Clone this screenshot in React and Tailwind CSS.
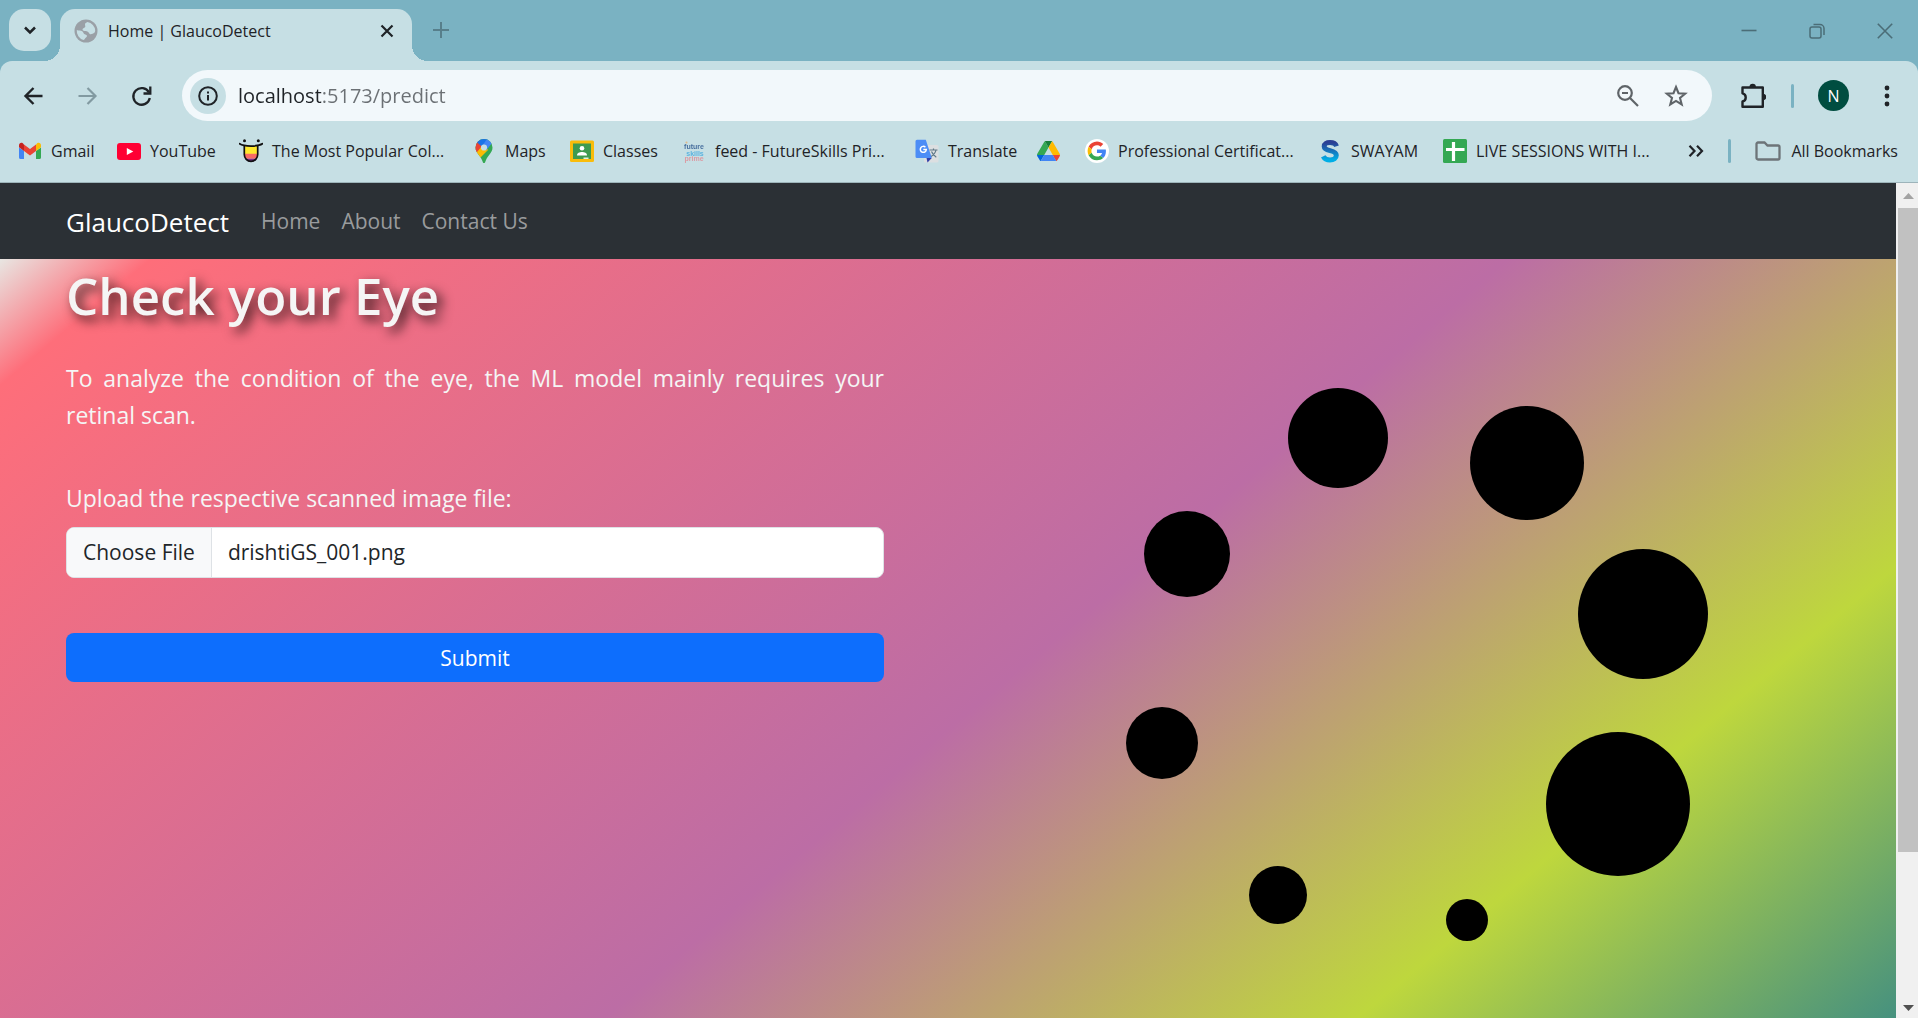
import React from "react";

function GlobeIcon() {
  return (
    <svg viewBox="0 0 24 24" className="size-6 shrink-0" aria-hidden="true">
      <circle cx="12" cy="12" r="11.500" fill="#9aa0a6" />
      <path
        fill="#c6dfe4"
        d="M13.500 3c-1.300.6-2.500 1-2.500 2.500s.8 1.700 0 2.700-2.500.8-2.500 2.300 1.700 1.500 3.200 1.500 3 1 3.500 2.300 2 1 3.400.5 2.600-1.300 2.600-3.300A9.200 9.200 0 0 0 13.500 3z"
      />
      <path
        fill="#c6dfe4"
        d="M2.800 11c2 1 4 0 5.500 1.300s1 2.700 3 3.200 2.200 2 .7 3-1 2.200-2.500 2.400A9.300 9.300 0 0 1 2.800 11z"
      />
    </svg>
  );
}

function GmailIcon() {
  return (
    <svg viewBox="0 0 24 24" className="size-6 shrink-0" aria-hidden="true">
      <path fill="#4285f4" d="M1 8.500v10A1.600 1.600 0 0 0 2.600 20H6V12z" />
      <path fill="#34a853" d="M18 20h3.400a1.600 1.600 0 0 0 1.600-1.500v-10L18 12z" />
      <path fill="#fbbc04" d="M18 5.500V12l5-3.700V6.200c0-2-2.200-3.100-3.800-1.900z" />
      <path fill="#ea4335" d="M6 12V5.500l6 4.500 6-4.500V12l-6 4.500z" />
      <path fill="#c5221f" d="M1 6.200v2.100L6 12V5.500L4.800 4.300C3.200 3.100 1 4.200 1 6.200z" />
    </svg>
  );
}

function YouTubeIcon() {
  return (
    <svg viewBox="0 0 24 24" className="size-6 shrink-0" aria-hidden="true">
      <rect x="0" y="4" width="24" height="17" rx="3" fill="#ff0033" />
      <path fill="#fff" d="M9.800 9v7l6.500-3.500z" />
    </svg>
  );
}

function ColorHuntIcon() {
  return (
    <svg viewBox="0 0 24 24" className="size-6 shrink-0" aria-hidden="true">
      <circle cx="5.500" cy="1.700" r="1.500" fill="#111" />
      <circle cx="19.300" cy="1.700" r="1.500" fill="#111" />
      <clipPath id="tongue">
        <path d="M5 7h14v9a7 7 0 0 1-14 0z" />
      </clipPath>
      <g clipPath="url(#tongue)">
        <path fill="#ffe92e" d="M4 6h16v9H4z" />
        <path fill="#f96b63" d="M4 14.800h16v5H4z" />
        <path fill="#7a2f8f" d="M4 19.800h16V24H4z" />
      </g>
      <path d="M5.300 7v8.600a6.700 6.700 0 0 0 13.400 0V7" fill="none" stroke="#111" strokeWidth="1.700" />
      <path d="M.6 4.800C5 7.800 19 7.800 23.400 4.800" fill="none" stroke="#111" strokeWidth="1.800" strokeLinecap="round" />
    </svg>
  );
}

function MapsIcon() {
  return (
    <svg viewBox="0 0 24 24" className="size-6 shrink-0" aria-hidden="true">
      <clipPath id="pin">
        <path d="M12 0a8.500 8.500 0 0 1 8.500 8.500c0 5.500-4.600 7.300-6.800 13.200-.6 1.600-.7 2.300-1.700 2.300s-1.100-.7-1.700-2.300C8.100 15.800 3.500 14 3.500 8.500A8.500 8.500 0 0 1 12 0z" />
      </clipPath>
      <g clipPath="url(#pin)">
        <path fill="#34a853" d="M0 0h24v24H0z" />
        <path fill="#fbbc04" d="M3 14.500 12 4l4 7L7 20z" />
        <path fill="#ea4335" d="M0 2h6l4 5-7 8.500H0z" />
        <path fill="#1a73e8" d="M4.500 3 9.800 7.500 16 .5 10-2z" />
        <path fill="#4285f4" d="m15 0-5 7 4 4.500 7-8.500z" />
      </g>
      <circle cx="12" cy="8.500" r="3.100" fill="#c6dfe4" />
    </svg>
  );
}

function ClassroomIcon() {
  return (
    <svg viewBox="0 0 24 24" className="size-6 shrink-0" aria-hidden="true">
      <rect y="1.500" width="24" height="21.500" rx="1.500" fill="#f9bc0b" />
      <rect x="3" y="4.500" width="18" height="15.500" fill="#3e9b50" />
      <circle cx="12" cy="9.300" r="2.300" fill="#fff" />
      <path fill="#fff" d="M7 16.500c0-2.600 2.500-3.500 5-3.500s5 .9 5 3.500z" />
      <path fill="#dff0e2" d="M13.500 18.500h5V20h-5z" />
    </svg>
  );
}

function FutureSkillsIcon() {
  return (
    <svg viewBox="0 0 24 24" className="size-6 shrink-0" aria-hidden="true">
      <g fontFamily="Liberation Sans, sans-serif" fontWeight="700" textAnchor="middle" opacity=".8">
        <text x="12" y="10" fontSize="7" fill="#28538c">future</text>
        <text x="13" y="16.500" fontSize="7" fill="#41a9de">skills</text>
        <text x="12" y="22" fontSize="7" fill="#e08a93">prime</text>
      </g>
      <circle cx="4.500" cy="3.500" r="1" fill="#f0a860" opacity=".7" />
    </svg>
  );
}

function TranslateIcon() {
  return (
    <svg viewBox="0 0 24 24" className="size-6 shrink-0" aria-hidden="true">
      <rect x="9" y="6" width="14.500" height="17.500" rx="1.500" fill="#dcdfe1" />
      <path d="M14.500 11h8M18.500 9.500V11M21 11c-.6 3-3.200 5.500-5.500 7M16.500 12.500c1 2.400 3 4.600 4.800 5.700" fill="none" stroke="#607988" strokeWidth="1.200" />
      <path fill="#2f3ea8" d="M11.500 19h5.300l-4.300 4.500z" />
      <path fill="#4c8df6" d="M2 .8h8.800L16.800 19H2A1.500 1.500 0 0 1 .5 17.500V2.300A1.500 1.500 0 0 1 2 .8z" />
      <path d="M10.400 8.200a3 3 0 1 0 .9 2.300H8.300" fill="none" stroke="#fff" strokeWidth="1.500" />
    </svg>
  );
}

function DriveIcon() {
  return (
    <svg viewBox="0 0 87.300 78" className="w-[23px] shrink-0" aria-hidden="true">
      <path d="m6.600 66.850 3.850 6.650c.8 1.400 1.950 2.500 3.300 3.300l13.750-23.800H0c0 1.550.4 3.100 1.200 4.500z" fill="#0066da" />
      <path d="M43.650 25 29.900 1.200c-1.350.8-2.500 1.900-3.300 3.300L1.200 48.500A9.060 9.060 0 0 0 0 53h27.500z" fill="#34a853" />
      <path d="M73.550 76.800c1.350-.8 2.500-1.900 3.300-3.300l1.600-2.750L86.100 57.500c.8-1.400 1.200-2.950 1.200-4.500H59.798l5.852 11.500z" fill="#ea4335" />
      <path d="M43.650 25 57.400 1.200C56.050.4 54.500 0 52.900 0H34.400c-1.600 0-3.150.45-4.500 1.200z" fill="#188038" />
      <path d="M59.800 53H27.500L13.750 76.800c1.350.8 2.900 1.200 4.500 1.200h50.800c1.600 0 3.150-.45 4.500-1.200z" fill="#4285f4" />
      <path d="M73.400 26.500 60.700 4.500c-.8-1.400-1.950-2.500-3.300-3.300L43.650 25 59.800 53h27.450c0-1.550-.4-3.100-1.200-4.500z" fill="#ffba00" />
    </svg>
  );
}

function GoogleIcon() {
  return (
    <svg viewBox="0 0 24 24" className="size-6 shrink-0" aria-hidden="true">
      <circle cx="12" cy="12" r="12" fill="#fff" />
      <g transform="translate(2.600 2.600) scale(.39)">
        <path fill="#ea4335" d="M24 9.500c3.540 0 6.710 1.220 9.210 3.600l6.850-6.850C35.900 2.380 30.470 0 24 0 14.620 0 6.510 5.380 2.560 13.220l7.980 6.190C12.430 13.720 17.740 9.500 24 9.500z" />
        <path fill="#4285f4" d="M46.980 24.550c0-1.570-.15-3.090-.38-4.550H24v9.020h12.940c-.58 2.960-2.260 5.480-4.780 7.180l7.730 6c4.510-4.180 7.090-10.360 7.090-17.650z" />
        <path fill="#fbbc05" d="M10.530 28.590c-.48-1.450-.76-2.990-.76-4.590s.27-3.140.76-4.590l-7.980-6.190C.92 16.460 0 20.120 0 24c0 3.880.92 7.540 2.560 10.780l7.970-6.190z" />
        <path fill="#34a853" d="M24 48c6.480 0 11.930-2.130 15.890-5.810l-7.730-6c-2.150 1.450-4.920 2.300-8.160 2.300-6.260 0-11.570-4.220-13.470-9.910l-7.980 6.190C6.510 42.620 14.620 48 24 48z" />
      </g>
    </svg>
  );
}

function SwayamIcon() {
  return (
    <svg viewBox="0 0 24 24" className="size-6 shrink-0" aria-hidden="true">
      <defs>
        <linearGradient id="swayam" x1="0" y1="0" x2="0" y2="1">
          <stop offset="0" stopColor="#2b3f94" />
          <stop offset="1" stopColor="#00aee6" />
        </linearGradient>
      </defs>
      <path
        d="M18.500 7.200C17.600 4.600 15.200 3.600 12 3.600c-3.600 0-5.800 1.500-5.800 3.900 0 5.400 12.100 2.800 12.100 8.700 0 2.900-2.600 4.700-6.300 4.700-3.300 0-5.600-1.300-6.800-3.600"
        fill="none"
        stroke="url(#swayam)"
        strokeWidth="5"
      />
    </svg>
  );
}

function SheetsIcon() {
  return (
    <svg viewBox="0 0 24 24" className="size-6 shrink-0" aria-hidden="true">
      <rect width="24" height="24" rx="1.500" fill="#34a853" />
      <path d="M10.500 3v19M3 10.500h18.500" stroke="#fff" strokeWidth="3.200" />
    </svg>
  );
}

const bookmarks = [
  { label: "Gmail", Icon: GmailIcon, width: "w-[74px]" },
  { label: "YouTube", Icon: YouTubeIcon, width: "w-[97px]" },
  { label: "The Most Popular Col...", Icon: ColorHuntIcon, width: "w-[208px]" },
  { label: "Maps", Icon: MapsIcon, width: "w-[73px]" },
  { label: "Classes", Icon: ClassroomIcon, width: "w-[87px]" },
  { label: "feed - FutureSkills Pri...", Icon: FutureSkillsIcon, width: "w-[208px]" },
  { label: "Translate", Icon: TranslateIcon, width: "w-[97px]" },
  { label: "", Icon: DriveIcon, width: "w-[23px]" },
  { label: "Professional Certificat...", Icon: GoogleIcon, width: "w-[208px]" },
  { label: "SWAYAM", Icon: SwayamIcon, width: "w-[100px]" },
  { label: "LIVE SESSIONS WITH I...", Icon: SheetsIcon, width: "w-[208px]" },
];

function TabStrip() {
  return (
    <div className="flex h-[61px] items-end bg-[#7ab2c2] pl-[9px]">
      <button aria-label="Search tabs" className="mr-[9px] mb-[10px] flex size-[42px] items-center justify-center rounded-[15px] bg-[#c6dfe4]">
        <svg viewBox="0 0 14 14" className="size-[14px]" aria-hidden="true">
          <path d="m2 4.500 5 5 5-5" fill="none" stroke="#1f2327" strokeWidth="2.500" />
        </svg>
      </button>
      <div className="relative flex h-[52px] w-[352px] items-center rounded-t-[15px] bg-[#c6dfe4] pr-[18px] pb-[9px] pl-[14px] before:absolute before:bottom-0 before:-left-4 before:size-4 before:bg-[radial-gradient(circle_at_0_0,transparent_16px,#c6dfe4_16px)] after:absolute after:-right-4 after:bottom-0 after:size-4 after:bg-[radial-gradient(circle_at_100%_0,transparent_16px,#c6dfe4_16px)]">
        <GlobeIcon />
        <span className="ml-[10px] flex-1 text-base text-[#1f2327]">Home | GlaucoDetect</span>
        <button aria-label="Close tab">
          <svg viewBox="0 0 14 14" className="size-[14px]" aria-hidden="true">
            <path d="m1.500 1.500 11 11m0-11-11 11" stroke="#1f2327" strokeWidth="2.200" />
          </svg>
        </button>
      </div>
      <button aria-label="New tab" className="mb-[23px] ml-[21px]">
        <svg viewBox="0 0 16 16" className="size-4" aria-hidden="true">
          <path d="M8 0v16M0 8h16" stroke="#577f8b" strokeWidth="2" />
        </svg>
      </button>
      <div className="mr-[25px] mb-[22px] ml-auto flex gap-[52px]">
        <button aria-label="Minimize">
          <svg viewBox="0 0 16 16" className="size-4" aria-hidden="true">
            <path d="M.5 7.500h15" stroke="#4b6d77" strokeWidth="1.600" />
          </svg>
        </button>
        <button aria-label="Restore">
          <svg viewBox="0 0 16 16" className="size-4" fill="none" stroke="#4b6d77" strokeWidth="1.500" aria-hidden="true">
            <rect x="1" y="4" width="11" height="11" rx="2" />
            <path d="M4.500 1.500H11A4 4 0 0 1 15 5.500V12" />
          </svg>
        </button>
        <button aria-label="Close">
          <svg viewBox="0 0 16 16" className="size-4" aria-hidden="true">
            <path d="m.8.800 14.400 14.400M15.200.8.800 15.200" stroke="#4b6d77" strokeWidth="1.600" />
          </svg>
        </button>
      </div>
    </div>
  );
}

function Toolbar() {
  return (
    <div className="flex h-[69px] items-center pr-[23px] pl-[21px]">
      <div className="flex gap-[30px]">
        <button aria-label="Back">
          <svg viewBox="0 0 24 24" className="size-6" fill="none" stroke="#1f2327" strokeWidth="2.400" aria-hidden="true">
            <path d="M12.500 4 4.500 12l8 8M5 12h16.500" />
          </svg>
        </button>
        <button aria-label="Forward">
          <svg viewBox="0 0 24 24" className="size-6" fill="none" stroke="#829aa1" strokeWidth="2.200" aria-hidden="true">
            <path d="m12.500 4 8 8-8 8M20 12H3.500" />
          </svg>
        </button>
        <button aria-label="Reload">
          <svg viewBox="0 0 24 24" className="size-6" fill="none" stroke="#1f2327" strokeWidth="2.300" aria-hidden="true">
            <path d="M20 8.500A8.300 8.300 0 1 0 20.800 14" />
            <path d="M21.300 2.500v7H14.500" />
          </svg>
        </button>
      </div>
      <div className="ml-[29px] flex h-[51px] flex-1 items-center rounded-full bg-[#f2f8fb] pr-6 pl-2">
        <button aria-label="View site information" className="flex size-9 items-center justify-center rounded-full bg-[#c6dfe4]">
          <svg viewBox="0 0 20 20" className="size-5" fill="none" stroke="#1f2327" strokeWidth="2" aria-hidden="true">
            <circle cx="10" cy="10" r="8.800" />
            <path d="M10 9v5.500M10 5.500v2" />
          </svg>
        </button>
        <input
          aria-label="Address"
          defaultValue="localhost:5173/predict"
          className="ml-3 h-9 min-w-0 flex-1 bg-[linear-gradient(90deg,#1f2327_83px,#6b7074_83px)] bg-clip-text text-xl text-transparent outline-none"
        />
        <button aria-label="Zoom">
          <svg viewBox="0 0 24 24" className="size-6" fill="none" stroke="#5f6468" strokeWidth="2.200" aria-hidden="true">
            <circle cx="9" cy="9" r="6.800" />
            <path d="m14 14 8 8M6 9h6" />
          </svg>
        </button>
        <button aria-label="Bookmark this tab" className="ml-6">
          <svg viewBox="0 0 24 24" className="size-6" fill="none" stroke="#5f6468" strokeWidth="2.100" aria-hidden="true">
            <path d="m12 3 2.500 6.200 6.700.5-5.200 4.300 1.700 6.500-5.700-3.600-5.700 3.600L8 14 2.800 9.700l6.700-.5z" />
          </svg>
        </button>
      </div>
      <button aria-label="Extensions" className="ml-[28px]">
        <svg viewBox="0 0 26 26" className="size-[26px]" aria-hidden="true">
          <path
            d="M2.500 4.500h20.300v19.300H2.500v-5.300c4.300-1 4.300-7.200 0-8.200z"
            fill="none"
            stroke="#1f2327"
            strokeWidth="2.400"
            strokeLinejoin="round"
          />
          <path fill="#1f2327" d="M9.500 4a3.200 3.200 0 0 1 6.400 0zM23 10.800a3.200 3.200 0 0 1 0 6.400z" />
        </svg>
      </button>
      <span className="ml-[25px] h-6 w-[3px] rounded-full bg-[#7ab2c2]" />
      <button aria-label="Profile" className="ml-6 flex size-[31px] items-center justify-center rounded-full bg-[#004d40] text-base text-white">
        N
      </button>
      <button aria-label="Menu" className="ml-[30px]">
        <svg viewBox="0 0 16 24" className="h-6 w-4" fill="#1f2327" aria-hidden="true">
          <circle cx="8" cy="4" r="2.400" />
          <circle cx="8" cy="12" r="2.400" />
          <circle cx="8" cy="20" r="2.400" />
        </svg>
      </button>
    </div>
  );
}

function BookmarkBar() {
  return (
    <div className="flex h-[52px] items-center pr-5 pb-[10px] pl-[18px] text-base text-[#1f2327]">
      <nav aria-label="Bookmarks" className="flex gap-[25px] whitespace-nowrap">
        {bookmarks.map(({ label, Icon, width }) => (
          <a key={label || "Drive"} href="#bookmark" aria-label={label || "Drive"} className={`${width} flex shrink-0 items-center gap-[9px]`}>
            <Icon />
            {label && <span>{label}</span>}
          </a>
        ))}
      </nav>
      <button aria-label="More bookmarks" className="ml-auto">
        <svg viewBox="0 0 16 16" className="size-4" fill="none" stroke="#1f2327" strokeWidth="2.200" aria-hidden="true">
          <path d="m1.500 2.800 5 5.200-5 5.200M9 2.800 14 8l-5 5.200" />
        </svg>
      </button>
      <span className="ml-6 h-6 w-[3px] rounded-full bg-[#7ab2c2]" />
      <button className="ml-6 flex items-center gap-[10px] whitespace-nowrap">
        <svg viewBox="0 0 26 20" className="h-5 w-[26px]" fill="none" stroke="#6d7478" strokeWidth="2.300" aria-hidden="true">
          <path d="M3 1.500h6.500l3 3H23a1.500 1.500 0 0 1 1.500 1.500v11a1.500 1.500 0 0 1-1.500 1.500H3A1.500 1.500 0 0 1 1.500 17V3A1.500 1.500 0 0 1 3 1.500z" />
        </svg>
        All Bookmarks
      </button>
    </div>
  );
}

const dots = [
  { x: 559, y: 661, r: 21 },
  { x: 370, y: 636, r: 29 },
  { x: 254, y: 484, r: 36 },
  { x: 279, y: 295, r: 43 },
  { x: 430, y: 179, r: 50 },
  { x: 619, y: 204, r: 57 },
  { x: 735, y: 355, r: 65 },
  { x: 710, y: 545, r: 72 },
];

function Spinner() {
  return (
    <svg viewBox="0 0 922 940" className="w-full" role="img" aria-label="Loading">
      {dots.map((d) => (
        <circle key={d.r} cx={d.x} cy={d.y} r={d.r} />
      ))}
    </svg>
  );
}

function SiteNav() {
  return (
    <nav className="flex h-[76px] shrink-0 items-center bg-[#2b3035] px-[66px] pt-0.5">
      <a href="#brand" className="text-[26px] text-white">GlaucoDetect</a>
      <div className="ml-8 flex gap-[21px] text-[21px] text-[#999b9d]">
        <a href="#home">Home</a>
        <a href="#about">About</a>
        <a href="#contact">Contact Us</a>
      </div>
    </nav>
  );
}

function PredictForm() {
  return (
    <form className="pt-1 text-[23px] leading-[37px] text-[#f5f5f5]" onSubmit={(e) => e.preventDefault()}>
      <h1 className="text-[51px] leading-[64px] font-semibold [text-shadow:5px_5px_12px_#000000cc]">Check your Eye</h1>
      <p className="mt-[33px] text-justify">
        To analyze the condition of the eye, the ML model mainly requires your retinal scan.
      </p>
      <label htmlFor="scan" className="mt-[46px] block">Upload the respective scanned image file:</label>
      <input id="scan" type="file" className="peer sr-only" />
      <label
        htmlFor="scan"
        className="mt-[10px] flex h-[51px] items-stretch overflow-hidden rounded-lg border border-[#dee2e6] bg-white text-[21px] text-[#212529]"
      >
        <span className="flex items-center border-r border-[#dee2e6] bg-[#f8f9fa] px-4">Choose File</span>
        <span className="flex items-center px-4">drishtiGS_001.png</span>
      </label>
      <button type="submit" className="mt-[55px] h-[49px] w-full rounded-lg bg-[#0d6efd] pt-0.5 text-[21px] text-white">Submit</button>
    </form>
  );
}

function ScrollBar() {
  return (
    <div className="flex w-[22px] shrink-0 flex-col bg-[#f0f0f0]">
      <svg viewBox="0 0 22 25" className="h-[25px]" aria-hidden="true">
        <path d="m7 16 5.500-6 5.500 6z" fill="#a3a3a3" />
      </svg>
      <div className="min-h-0 flex-1">
        <div className="ml-0.5 h-[82%] bg-[#c1c1c1]" />
      </div>
      <svg viewBox="0 0 22 25" className="h-[25px]" aria-hidden="true">
        <path d="m7 12 5.500 6 5.500-6z" fill="#505050" />
      </svg>
    </div>
  );
}

export default function App() {
  return (
    <div className="flex h-screen flex-col overflow-hidden font-['Open_Sans',sans-serif]">
      <header className="shrink-0 bg-[#7ab2c2]">
        <TabStrip />
        <div className="rounded-t-[12px] border-b border-[#9db4ba] bg-[#c6dfe4]">
          <Toolbar />
          <BookmarkBar />
        </div>
      </header>
      <div className="flex min-h-0 flex-1">
        <div className="min-w-0 flex-1 overflow-hidden">
          <SiteNav />
          <main className="grid grid-cols-[818fr_922fr] gap-6 bg-[linear-gradient(140deg,#e8e6e2_0%,#fe6e7a_5%,#bc6da5_50%,#bed73d_75%,#167599_100%)] px-[66px]">
            <PredictForm />
            <Spinner />
          </main>
        </div>
        <ScrollBar />
      </div>
    </div>
  );
}
